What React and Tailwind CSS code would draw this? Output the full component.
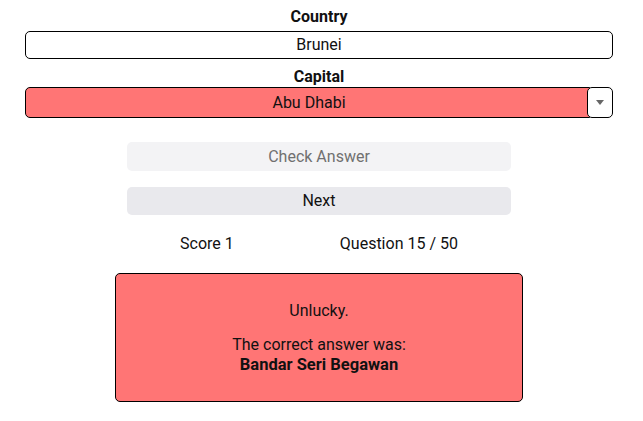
export default function App() {
  return (
    <div className="w-[643px] h-[421px] bg-white text-[#111] font-['Roboto','Liberation_Sans',sans-serif] text-base">
      <div className="ml-[25px] w-[588px] pt-[7px] flex flex-col items-center">
        <label className="font-bold leading-5">Country</label>
        <div className="mt-[4px] w-full h-[28px] border border-black rounded-[5px] flex items-center justify-center leading-5">
          Brunei
        </div>
        <label className="mt-[8px] font-bold leading-5">Capital</label>
        <div className="w-full h-[31px] flex">
          <div className="flex-1 -mr-[3px] bg-[#ff7575] border border-black rounded-l-[5px] flex items-center justify-center leading-5 pl-[3px]">
            Abu Dhabi
          </div>
          <div className="relative w-[26px] bg-white border border-black rounded-[5px] flex items-center justify-center">
            <span className="w-0 h-0 border-l-[4px] border-r-[4px] border-t-[5px] border-l-transparent border-r-transparent border-t-[#666]" />
          </div>
        </div>
        <button className="mt-[24px] w-[384px] h-[29px] rounded-[5px] bg-[#f3f3f5] text-[#707070] leading-5">
          Check Answer
        </button>
        <button className="mt-[16px] w-[384px] h-[28px] rounded-[5px] bg-[#e9e9ed] text-[#111] leading-5">
          Next
        </button>
        <div className="mt-[19px] w-[384px] flex justify-around leading-5">
          <span>Score 1</span>
          <span>Question 15 / 50</span>
        </div>
        <div className="mt-[19px] w-[408px] h-[129px] bg-[#ff7575] border border-black rounded-[5px] flex flex-col items-center justify-center leading-5 text-center">
          <p>Unlucky.</p>
          <p className="mt-[14px]">The correct answer was:</p>
          <p className="font-bold text-[16.5px]">Bandar Seri Begawan</p>
        </div>
      </div>
    </div>
  )
}
